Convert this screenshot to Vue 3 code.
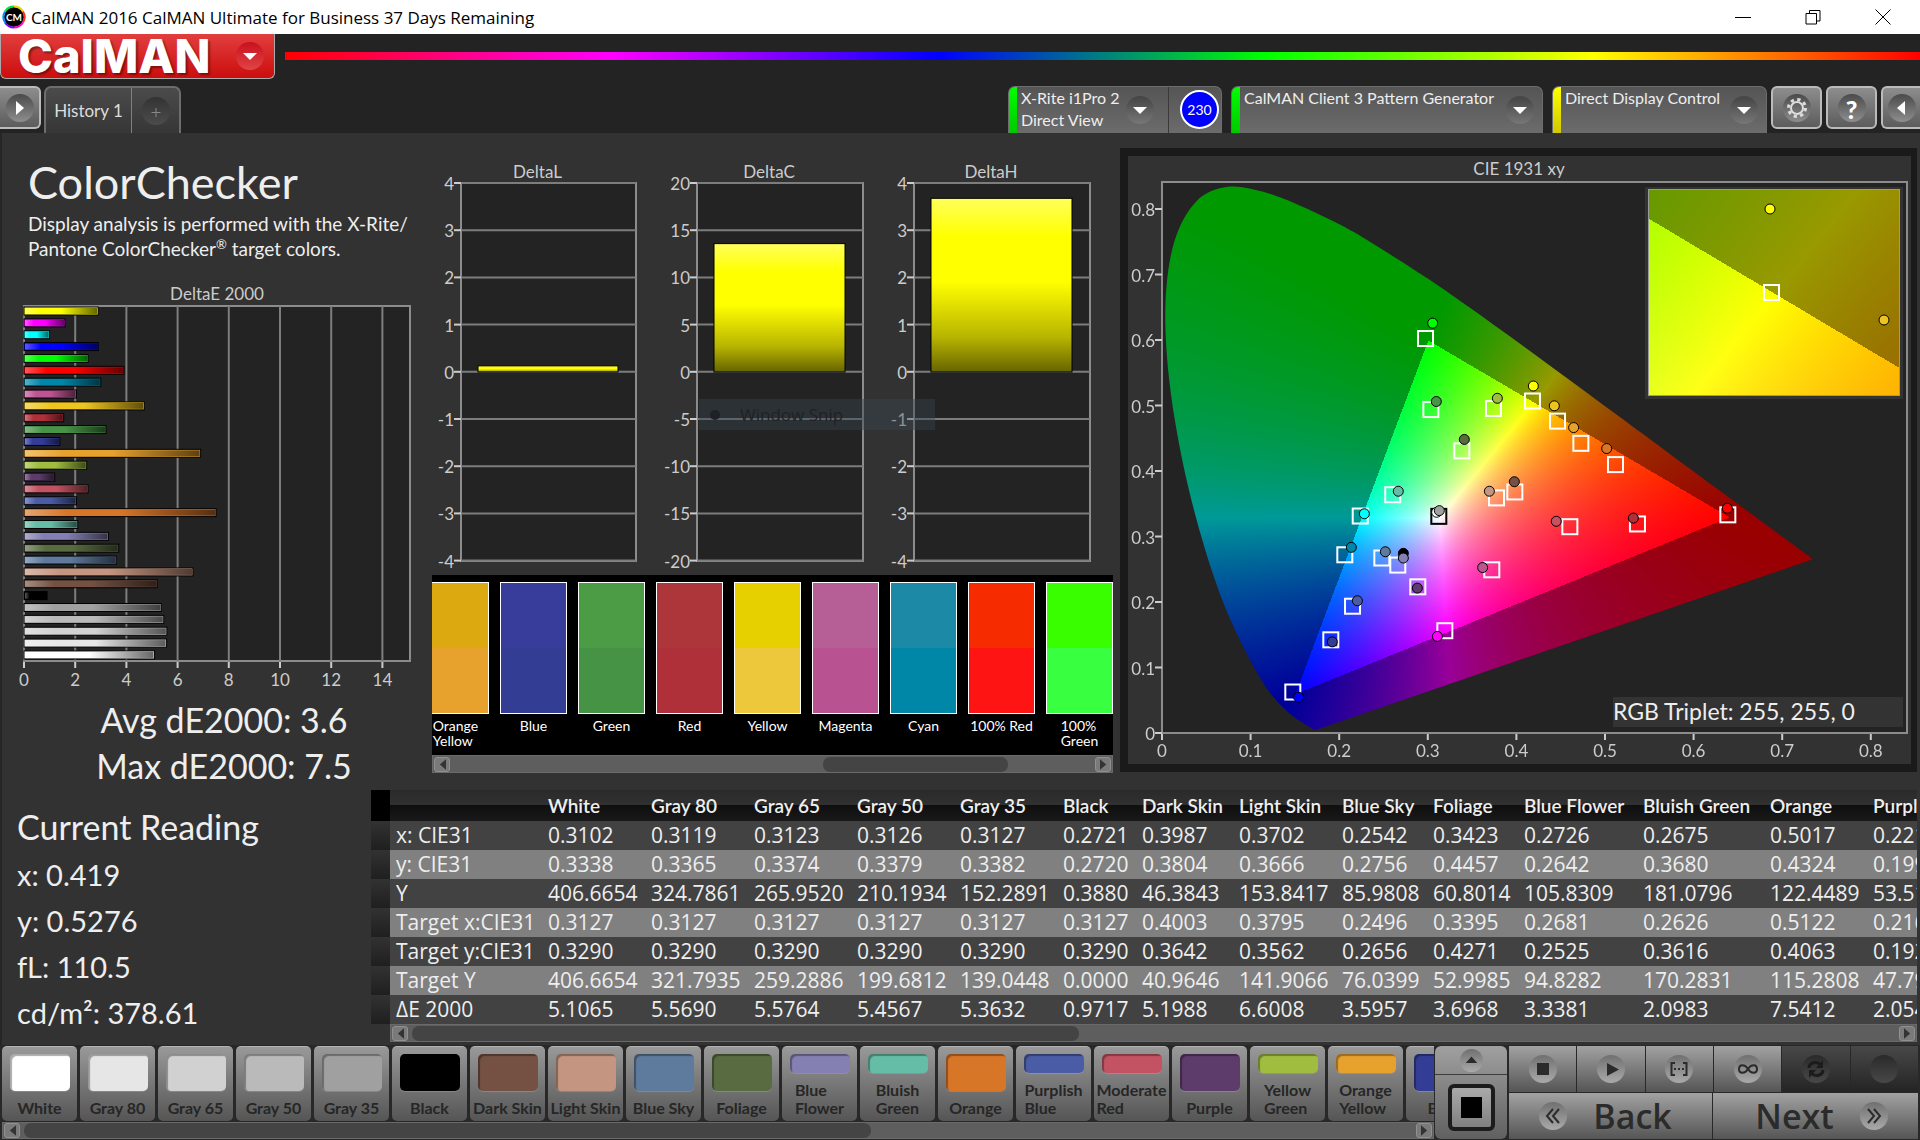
<script setup>
import { onMounted, ref } from 'vue'

/* DeltaE 2000 bars, top to bottom */
const deltaE = [
  [2.9, '#ffff00'], [1.6, '#ff00ff'], [1, '#00ffff'], [2.9, '#0000ff'], [2.5, '#00ff00'],
  [3.9, '#ff0000'], [3, '#0086a8'], [2.05, '#bd5494'], [4.7, '#eec51f'], [1.55, '#b0303a'],
  [3.2, '#479447'], [1.4, '#343d96'], [6.9, '#e7a22e'], [2.45, '#a0bd40'], [1.2, '#5d3b6b'],
  [2.5, '#c35362'], [2.05, '#4a5ca6'], [7.5, '#d87628'], [2.1, '#66bda7'], [3.3, '#8480b2'],
  [3.7, '#596c41'], [3.6, '#5e7a9d'], [6.6, '#c49580'], [5.2, '#745143'], [0.9, '#000000'],
  [5.36, '#a0a0a0'], [5.46, '#bababa'], [5.58, '#d2d2d2'], [5.57, '#e7e7e7'], [5.1, '#ffffff']
]
const deltaETicks = [0, 2, 4, 6, 8, 10, 12, 14]

const deltaCharts = [
  { title: 'DeltaL', x: 29, w: 175, max: 4, value: 0.13 },
  { title: 'DeltaC', x: 265, w: 166, max: 20, value: 13.6 },
  { title: 'DeltaH', x: 482, w: 176, max: 4, value: 3.68 }
]
const steps = [0, 1, 2, 3, 4, 5, 6, 7, 8]
const stepY = (i) => 50 + i * 47.2
const barHeight = (c) => (c.value / c.max) * 188.8

const swatches = [
  ['Orange Yellow', '#dcaa10', '#e7a22e'],
  ['Blue', '#383c9a', '#343d94'],
  ['Green', '#4b9c44', '#479345'],
  ['Red', '#ad363a', '#b0303a'],
  ['Yellow', '#e6d000', '#edc83a'],
  ['Magenta', '#b65e96', '#b95290'],
  ['Cyan', '#1c8aa6', '#0086a6'],
  ['100% Red', '#f62c00', '#ff1414'],
  ['100% Green', '#38fe00', '#38ff40']
]

/* Chromaticity diagram */
const PW = 745
const PH = 551
const SX = 886
const SY = 655
const px = (x) => x * SX
const py = (y) => PH - y * SY
const cieX = [0, 0.1, 0.2, 0.3, 0.4, 0.5, 0.6, 0.7, 0.8]
const targets = [
  [0.298, 0.6015], [0.304, 0.493], [0.3747, 0.4947], [0.339, 0.43], [0.261, 0.363], [0.2243, 0.3305],
  [0.2069, 0.2713], [0.2487, 0.2664], [0.2667, 0.2556], [0.2893, 0.2224], [0.2156, 0.1928], [0.1911, 0.1415],
  [0.1482, 0.0618], [0.3198, 0.1554], [0.3728, 0.2484], [0.3781, 0.3582], [0.4187, 0.5061], [0.447, 0.4754],
  [0.4733, 0.4415], [0.5124, 0.409], [0.3988, 0.3673], [0.4609, 0.3142], [0.5372, 0.3184], [0.6392, 0.3323]
]
const readings = [
  [0.3055, 0.6257, '#00ff00'], [0.3096, 0.5061, '#479447'], [0.3785, 0.511, '#a0bd40'], [0.3412, 0.4482, '#596c41'],
  [0.2667, 0.3691, '#66bda7'], [0.2284, 0.3347, '#00ffff'], [0.2137, 0.2834, '#0086a8'], [0.2521, 0.2767, '#5e7a9d'],
  [0.2724, 0.2743, '#000000'], [0.2724, 0.2671, '#8480b2'], [0.2882, 0.2212, '#5d3b6b'], [0.2205, 0.2019, '#4a5ca6'],
  [0.1922, 0.1391, '#343d96'], [0.1542, 0.0546, '#0000ff'], [0.3108, 0.1475, '#ff00ff'], [0.3619, 0.2526, '#bd5494'],
  [0.3695, 0.3691, '#c49580'], [0.31, 0.337, '#ffffff'], [0.313, 0.3395, '#a0a0a0'], [0.3977, 0.3836, '#745143'],
  [0.4191, 0.5297, '#ffff00'], [0.4428, 0.4995, '#eec51f'], [0.4646, 0.4663, '#e7a22e'], [0.5019, 0.4343, '#d87628'],
  [0.445, 0.3232, '#c35362'], [0.532, 0.3281, '#b0303a'], [0.6381, 0.3431, '#ff0000']
]
const locus = [
  [0.1741, 0.005], [0.1733, 0.0048], [0.1714, 0.0051], [0.1644, 0.0109], [0.1566, 0.0177], [0.144, 0.0297],
  [0.1241, 0.0578], [0.1096, 0.0868], [0.0913, 0.1327], [0.0687, 0.2007], [0.0454, 0.295], [0.0235, 0.4127],
  [0.0082, 0.5384], [0.0039, 0.6548], [0.0139, 0.7502], [0.0389, 0.812], [0.0743, 0.8338], [0.1142, 0.8262],
  [0.1547, 0.8059], [0.1929, 0.7816], [0.2296, 0.7543], [0.3016, 0.6923], [0.3731, 0.6245], [0.4441, 0.5547],
  [0.5125, 0.4866], [0.5752, 0.4242], [0.627, 0.3725], [0.6658, 0.334], [0.6915, 0.3083], [0.7347, 0.2653]
]

function chromaImage(w, h, x0, y0, sx, sy) {
  const c = document.createElement('canvas')
  c.width = w
  c.height = h
  const ctx = c.getContext('2d')
  const img = ctx.createImageData(w, h)
  for (let j = 0; j < h; j++) {
    const y = Math.max(y0 - j / sy, 0.0001)
    for (let i = 0; i < w; i++) {
      const x = x0 + i / sx
      const X = x / y
      const Z = (1 - x - y) / y
      const r = 3.2406 * X - 1.5372 - 0.4986 * Z
      const g = -0.9689 * X + 1.8758 + 0.0415 * Z
      const b = 0.0557 * X - 0.204 + 1.057 * Z
      const outside = r < 0 || g < 0 || b < 0
      const k = ((outside ? 0.6 : 1) * 255) / Math.max(r, g, b)
      const o = (j * w + i) * 4
      img.data[o] = Math.max(r, 0) * k
      img.data[o + 1] = Math.max(g, 0) * k
      img.data[o + 2] = Math.max(b, 0) * k
      img.data[o + 3] = 255
    }
  }
  ctx.putImageData(img, 0, 0)
  return c
}

const diagram = ref(null)
const inset = ref(null)

onMounted(() => {
  const ctx = diagram.value.getContext('2d')
  const p = locus.map(([x, y]) => [px(x), py(y)])
  ctx.beginPath()
  ctx.moveTo(p[0][0], p[0][1])
  for (let i = 0; i < p.length - 1; i++) {
    const a = p[Math.max(i - 1, 0)]
    const b = p[i]
    const c = p[i + 1]
    const d = p[Math.min(i + 2, p.length - 1)]
    ctx.bezierCurveTo(
      b[0] + (c[0] - a[0]) / 6, b[1] + (c[1] - a[1]) / 6,
      c[0] - (d[0] - b[0]) / 6, c[1] - (d[1] - b[1]) / 6,
      c[0], c[1]
    )
  }
  ctx.closePath()
  ctx.clip()
  ctx.drawImage(chromaImage(PW, PH, 0, PH / SY, SX, SY), 0, 0)
  inset.value.getContext('2d').drawImage(
    chromaImage(250, 205, 0.4193 - 125 / 4800, 0.5053 + 103 / 3600, 4800, 3600), 0, 0
  )
})

const columns = ['White', 'Gray 80', 'Gray 65', 'Gray 50', 'Gray 35', 'Black', 'Dark Skin', 'Light Skin', 'Blue Sky', 'Foliage', 'Blue Flower', 'Bluish Green', 'Orange', 'Purplish Blue']
const rows = [
  ['x: CIE31', '0.3102', '0.3119', '0.3123', '0.3126', '0.3127', '0.2721', '0.3987', '0.3702', '0.2542', '0.3423', '0.2726', '0.2675', '0.5017', '0.2213'],
  ['y: CIE31', '0.3338', '0.3365', '0.3374', '0.3379', '0.3382', '0.2720', '0.3804', '0.3666', '0.2756', '0.4457', '0.2642', '0.3680', '0.4324', '0.1991'],
  ['Y', '406.6654', '324.7861', '265.9520', '210.1934', '152.2891', '0.3880', '46.3843', '153.8417', '85.9808', '60.8014', '105.8309', '181.0796', '122.4489', '53.5106'],
  ['Target x:CIE31', '0.3127', '0.3127', '0.3127', '0.3127', '0.3127', '0.3127', '0.4003', '0.3795', '0.2496', '0.3395', '0.2681', '0.2626', '0.5122', '0.2160'],
  ['Target y:CIE31', '0.3290', '0.3290', '0.3290', '0.3290', '0.3290', '0.3290', '0.3642', '0.3562', '0.2656', '0.4271', '0.2525', '0.3616', '0.4063', '0.1920'],
  ['Target Y', '406.6654', '321.7935', '259.2886', '199.6812', '139.0448', '0.0000', '40.9646', '141.9066', '76.0399', '52.9985', '94.8282', '170.2831', '115.2808', '47.7903'],
  ['ΔE 2000', '5.1065', '5.5690', '5.5764', '5.4567', '5.3632', '0.9717', '5.1988', '6.6008', '3.5957', '3.6968', '3.3381', '2.0983', '7.5412', '2.0543']
]

const patches = [
  ['White', '#ffffff'], ['Gray 80', '#e6e6e6'], ['Gray 65', '#d1d1d1'], ['Gray 50', '#bababa'], ['Gray 35', '#a0a0a0'],
  ['Black', '#000000'], ['Dark Skin', '#745143'], ['Light Skin', '#c49580'], ['Blue Sky', '#5e7a9d'], ['Foliage', '#596c41'],
  ['Blue\nFlower', '#8480b2'], ['Bluish\nGreen', '#66bda7'], ['Orange', '#d87628'], ['Purplish\nBlue', '#4a5ca6'],
  ['Moderate\nRed', '#c35362'], ['Purple', '#5d3b6b'], ['Yellow\nGreen', '#a0bd40'], ['Orange\nYellow', '#e7a22e'], ['Blue', '#343d96']
]
</script>

<template>
  <div class="app">
    <header class="titlebar">
      <svg class="app-icon" viewBox="0 0 24 24" aria-hidden="true">
        <circle cx="12" cy="12" r="10" fill="#000" />
        <g fill="none" stroke-width="2">
          <path d="M12 1.500A10.500 10.500 0 0 1 21 6.500" stroke="#e6d500" />
          <path d="M21 6.500A10.500 10.500 0 0 1 21 17.500" stroke="#ff2a2a" />
          <path d="M21 17.500A10.500 10.500 0 0 1 12 22.500" stroke="#ff00c8" />
          <path d="M12 22.500A10.500 10.500 0 0 1 3 17.500" stroke="#7a00ff" />
          <path d="M3 17.500A10.500 10.500 0 0 1 3 6.500" stroke="#0090ff" />
          <path d="M3 6.500A10.500 10.500 0 0 1 12 1.500" stroke="#00e04a" />
        </g>
        <text x="12" y="16" text-anchor="middle" class="icon-text">CM</text>
      </svg>
      <span class="title">CalMAN 2016 CalMAN Ultimate for Business 37 Days Remaining</span>
      <div class="window-buttons">
        <button aria-label="Minimize"><svg viewBox="0 0 16 16"><path d="M0 8.500H16" /></svg></button>
        <button aria-label="Restore"><svg viewBox="0 0 16 16"><path d="M1 4.500H11.500V15H1ZM4.500 4.500V1.500H15V12H11.500" /></svg></button>
        <button aria-label="Close"><svg viewBox="0 0 16 16"><path d="M0.500 0.500L15.500 15.500M15.500 0.500L0.500 15.500" /></svg></button>
      </div>
    </header>

    <div class="brand-row">
      <button class="brand">
        <span class="wordmark">CalMAN</span>
        <span class="knob red"><svg viewBox="0 0 28 28"><path d="M7 11H21L14 18Z" /></svg></span>
      </button>
      <div class="spectrum"></div>
    </div>

    <div class="toolbar">
      <button class="square edge-left" aria-label="Expand left panel">
        <span class="knob"><svg viewBox="0 0 28 28"><path d="M10 7V21L18 14Z" /></svg></span>
      </button>
      <nav class="tabs">
        <button class="tab">History 1</button>
        <button class="tab add" aria-label="Add tab"><span class="knob dim"><svg viewBox="0 0 28 28"><path d="M14 11V20M9.500 15.500H18.500" stroke="#888" /></svg></span></button>
      </nav>
      <div class="devices">
        <div class="device meter">
          <i class="status green"></i>
          <button class="device-main"><span class="device-name">X-Rite i1Pro 2<br />Direct View</span>
            <span class="knob dark"><svg viewBox="0 0 28 28"><path d="M7 11H21L14 18Z" /></svg></span></button>
          <button class="count"><span>230</span></button>
        </div>
        <div class="device source">
          <i class="status green"></i>
          <button class="device-main"><span class="device-name">CalMAN Client 3 Pattern Generator</span>
            <span class="knob dark"><svg viewBox="0 0 28 28"><path d="M7 11H21L14 18Z" /></svg></span></button>
        </div>
        <div class="device display">
          <i class="status yellow"></i>
          <button class="device-main"><span class="device-name">Direct Display Control</span>
            <span class="knob dark"><svg viewBox="0 0 28 28"><path d="M7 11H21L14 18Z" /></svg></span></button>
        </div>
        <button class="square" aria-label="Settings">
          <span class="knob"><svg viewBox="0 0 28 28">
            <circle cx="14" cy="14" r="6" fill="none" stroke="#ddd" stroke-width="2" />
            <circle cx="14" cy="14" r="8.500" fill="none" stroke="#ddd" stroke-width="3" stroke-dasharray="3.300 3.375" />
          </svg></span>
        </button>
        <button class="square" aria-label="Help"><span class="knob help">?</span></button>
        <button class="square edge-right" aria-label="Expand right panel">
          <span class="knob"><svg viewBox="0 0 28 28"><path d="M17 7V21L9 14Z" /></svg></span>
        </button>
      </div>
    </div>

    <main class="content">
      <section class="upper">
        <div class="summary">
          <h1>ColorChecker</h1>
          <p class="intro">Display analysis is performed with the X-Rite/<br />Pantone ColorChecker<sup>®</sup> target colors.</p>
          <svg class="chart" viewBox="0 0 430 414">
            <defs>
              <linearGradient id="sheen" x1="0" x2="1" y1="0" y2="0">
                <stop offset="0" stop-color="#fff" stop-opacity=".35" />
                <stop offset=".22" stop-color="#fff" stop-opacity="0" />
                <stop offset=".5" stop-color="#000" stop-opacity="0" />
                <stop offset="1" stop-color="#000" stop-opacity=".6" />
              </linearGradient>
            </defs>
            <text x="215" y="17" text-anchor="middle">DeltaE 2000</text>
            <rect x="22" y="23" width="386" height="355" class="plot" />
            <g v-for="t in deltaETicks" :key="t">
              <line :x1="22 + t * 25.6" :x2="22 + t * 25.6" y1="23" y2="378" class="grid" />
              <line :x1="22 + t * 25.6" :x2="22 + t * 25.6" y1="379" y2="385" class="tick" />
              <text :x="22 + t * 25.6" y="403" text-anchor="middle">{{ t }}</text>
            </g>
            <g v-for="(b, i) in deltaE" :key="i">
              <rect x="22" :y="24 + i * 11.86" :width="b[0] * 25.6" height="8" :fill="b[1]" stroke="#000" />
              <rect x="23" :y="25 + i * 11.86" :width="b[0] * 25.6 - 2" height="6" fill="url(#sheen)" />
            </g>
          </svg>
          <p class="stat">Avg dE2000: 3.6</p>
          <p class="stat">Max dE2000: 7.5</p>
        </div>

        <div class="middle">
          <div class="delta">
            <svg class="chart" viewBox="0 0 688 442">
              <defs>
                <linearGradient id="yellow" x1="0" x2="0" y1="0" y2="1">
                  <stop offset="0" stop-color="#ffff5c" />
                  <stop offset=".22" stop-color="#ffff00" />
                  <stop offset=".48" stop-color="#ffff00" />
                  <stop offset=".8" stop-color="#b8b400" />
                  <stop offset="1" stop-color="#666400" />
                </linearGradient>
              </defs>
              <g v-for="c in deltaCharts" :key="c.title">
                <text :x="c.x + c.w / 2 - 11" y="45" text-anchor="middle">{{ c.title }}</text>
                <rect :x="c.x" y="50" :width="c.w" height="378" class="plot" />
                <g v-for="i in steps" :key="i">
                  <line :x1="c.x" :x2="c.x + c.w" :y1="stepY(i)" :y2="stepY(i)" class="grid" />
                  <line :x1="c.x - 7" :x2="c.x" :y1="stepY(i)" :y2="stepY(i)" class="tick thin" />
                  <text :x="c.x - 7" :y="stepY(i) + 7" text-anchor="end">{{ c.max - (i * c.max) / 4 }}</text>
                </g>
                <rect :x="c.x + 17" :y="239 - barHeight(c)" :width="c.w - 35" :height="barHeight(c)" fill="url(#yellow)" stroke="#000" />
              </g>
            </svg>
            <div class="ghost"><i></i><span>Window Snip</span></div>
          </div>
          <div class="comparison">
            <div class="swatch-strip">
              <figure v-for="s in swatches" :key="s[0]" class="swatch">
                <div class="swatch-color"><i :style="{ background: s[1] }"></i><i :style="{ background: s[2] }"></i></div>
                <figcaption :class="{ two: s[0] === 'Orange Yellow' || s[0] === '100% Green' }">{{ s[0] }}</figcaption>
              </figure>
            </div>
            <div class="scroll strip-scroll">
              <button aria-label="Scroll left"><svg viewBox="0 0 8 12"><path d="M8 0V12L1 6Z" /></svg></button>
              <div class="track"><i></i></div>
              <button aria-label="Scroll right"><svg viewBox="0 0 8 12"><path d="M0 0V12L7 6Z" /></svg></button>
            </div>
          </div>
        </div>

        <div class="cie">
          <svg class="chart" viewBox="0 0 783 608">
            <text x="391" y="19" text-anchor="middle">CIE 1931 xy</text>
            <g transform="translate(34 26)">
              <rect width="745" height="551" class="plot" />
              <foreignObject width="745" height="551"><canvas ref="diagram" width="745" height="551"></canvas></foreignObject>
              <g v-for="v in cieX" :key="v">
                <line :x1="px(v)" :x2="px(v)" y1="552" y2="558" class="tick" />
                <text :x="px(v)" y="575" text-anchor="middle">{{ v }}</text>
                <line x1="-7" x2="0" :y1="py(v)" :y2="py(v)" class="tick" />
                <text x="-7" :y="py(v) + 7" text-anchor="end">{{ v }}</text>
              </g>
              <rect v-for="(t, i) in targets" :key="'t' + i" :x="px(t[0]) - 8" :y="py(t[1]) - 8" width="15" height="15" class="target" />
              <rect :x="px(0.313) - 8" :y="py(0.33) - 8" width="15" height="15" class="target white-point" />
              <circle v-for="(r, i) in readings" :key="'r' + i" :cx="px(r[0])" :cy="py(r[1])" r="5" :fill="r[2]" stroke="#000" />
              <rect x="483" y="5" width="258" height="212" fill="#333" />
              <foreignObject x="487" y="8" width="250" height="205"><canvas ref="inset" width="250" height="205"></canvas></foreignObject>
              <rect x="486.500" y="7.500" width="251" height="206" fill="none" stroke="#999" />
              <circle cx="608" cy="27" r="5" fill="#ffff00" stroke="#000" />
              <rect x="602" y="103" width="15" height="15" class="target" />
              <circle cx="722" cy="138" r="5" fill="#eec51f" stroke="#000" />
              <rect x="451" y="515" width="290" height="30" fill="#333" />
              <text x="451" y="538" class="triplet">RGB Triplet: 255, 255, 0</text>
            </g>
          </svg>
        </div>
      </section>

      <section class="lower">
        <div class="reading">
          <h2>Current Reading</h2>
          <p>x: 0.419</p>
          <p>y: 0.5276</p>
          <p>fL: 110.5</p>
          <p>cd/m²: 378.61</p>
        </div>
        <div class="data">
          <div class="table-clip">
            <table>
              <colgroup>
                <col class="w-handle" /><col class="w-label" />
                <col class="w-wide" /><col class="w-wide" /><col class="w-wide" /><col class="w-wide" /><col class="w-wide" />
                <col class="w-black" /><col class="w-dark" /><col class="w-wide" /><col class="w-sky" /><col class="w-sky" />
                <col class="w-flower" /><col class="w-bluish" /><col class="w-wide" /><col class="w-last" />
              </colgroup>
              <thead>
                <tr><td class="handle"></td><th></th><th v-for="c in columns" :key="c" scope="col">{{ c }}</th></tr>
              </thead>
              <tbody>
                <tr v-for="r in rows" :key="r[0]">
                  <td class="handle"></td>
                  <th scope="row">{{ r[0] }}</th>
                  <td v-for="(v, i) in r.slice(1)" :key="i">{{ v }}</td>
                </tr>
              </tbody>
            </table>
          </div>
          <div class="scroll table-scroll">
            <button aria-label="Scroll left"><svg viewBox="0 0 8 12"><path d="M8 0V12L1 6Z" /></svg></button>
            <div class="track"><i></i></div>
            <button aria-label="Scroll right"><svg viewBox="0 0 8 12"><path d="M0 0V12L7 6Z" /></svg></button>
          </div>
        </div>
      </section>
    </main>

    <footer class="dock">
      <div class="patch-area">
        <div class="patches">
          <button v-for="p in patches" :key="p[0]" class="patch">
            <i :class="{ short: p[0].includes('\n') }" :style="{ background: p[1] }"></i>
            <span>{{ p[0] }}</span>
          </button>
        </div>
        <div class="scroll patch-scroll">
          <button aria-label="Scroll left"><svg viewBox="0 0 8 12"><path d="M8 0V12L1 6Z" /></svg></button>
          <div class="track"><i></i></div>
          <button aria-label="Scroll right"><svg viewBox="0 0 8 12"><path d="M0 0V12L7 6Z" /></svg></button>
        </div>
      </div>

      <div class="pattern">
        <button class="up" aria-label="Show pattern options"><span class="knob light"><svg viewBox="0 0 28 28"><path d="M7 17H21L14 9Z" /></svg></span></button>
        <button class="window" aria-label="Pattern window"><span><i></i></span></button>
      </div>

      <div class="transport">
        <div class="actions">
          <button aria-label="Stop"><span class="knob light"><svg viewBox="0 0 28 28"><path d="M8 8H20V20H8Z" /></svg></span></button>
          <button aria-label="Play"><span class="knob light"><svg viewBox="0 0 28 28"><path d="M10 8V21L22 14.500Z" /></svg></span></button>
          <button aria-label="Read series"><span class="knob light"><svg viewBox="0 0 28 28"><path d="M10 8H6.500V20H10M18 8H21.500V20H18" class="line" /><path d="M9 13H11V15H9ZM13 13H15V15H13ZM17 13H19V15H17Z" /></svg></span></button>
          <button aria-label="Read continuously"><span class="knob light"><svg viewBox="0 0 28 28"><path d="M14 14C11 9 5 9 5 14S11 19 14 14S23 9 23 14S17 19 14 14Z" class="line" /></svg></span></button>
          <button aria-label="Refresh" disabled><span class="knob off"><svg viewBox="0 0 28 28"><path d="M7 13C7 8 13 6 18 9M21 15C21 20 15 22 10 19" class="line thick" /><path d="M21 5V13H14ZM7 23V15H14Z" /></svg></span></button>
          <button aria-label="Record" disabled><span class="knob off"></span></button>
        </div>
        <div class="steps">
          <button class="back"><span class="knob light"><svg viewBox="0 0 28 28"><path d="M14 7L8 14L14 21M20 7L14 14L20 21" class="line" /></svg></span>Back</button>
          <button class="next">Next<span class="knob light"><svg viewBox="0 0 28 28"><path d="M8 7L14 14L8 21M14 7L20 14L14 21" class="line" /></svg></span></button>
        </div>
      </div>
    </footer>
  </div>
</template>

<style>
body {
  background: #232323;
}
</style>

<style scoped>
.app {
  min-height: 100vh;
  display: flex;
  flex-direction: column;
  background: #232323;
  color: #eee;
  font-family: Lato, "Open Sans", sans-serif;
  overflow: hidden;
}
.app * {
  box-sizing: border-box;
}
button {
  border: 0;
  margin: 0;
  padding: 0;
  background: none;
  color: inherit;
  font: inherit;
}
svg {
  display: block;
}
p, h1, h2, figure {
  margin: 0;
  font-weight: 400;
}

/* Title bar */
.titlebar {
  height: 34px;
  display: flex;
  align-items: center;
  gap: 5px;
  padding-left: 2px;
  background: #fff;
  color: #000;
}
.app-icon {
  width: 24px;
  height: 24px;
}
.icon-text {
  font: 700 10px Lato, sans-serif;
  fill: #fff;
}
.title {
  flex: 1;
  font: 17px "Open Sans", sans-serif;
}
.window-buttons {
  display: flex;
  padding-right: 2px;
}
.window-buttons button {
  width: 70px;
  height: 34px;
  display: grid;
  place-items: center;
}
.window-buttons svg {
  width: 16px;
  height: 16px;
  fill: none;
  stroke: #000;
}

/* Brand and spectrum */
.brand-row {
  display: flex;
  height: 45px;
  gap: 10px;
}
.brand {
  width: 275px;
  display: flex;
  align-items: center;
  justify-content: space-between;
  padding: 0 10px 0 17px;
  border: 1px solid #aaa;
  border-top: 0;
  border-radius: 0 0 6px 6px;
  background: linear-gradient(#e23e3e, #cc0d0d);
  color: #fff;
}
.wordmark {
  font: 800 47px/44px Inter, sans-serif;
  text-shadow: 2px 2px 2px #0006;
}
.spectrum {
  flex: 1;
  height: 8px;
  margin-top: 18px;
  background: linear-gradient(90deg, #f00, #f0f, #00f, #0f0, #ff0, #f00);
}

/* Round knobs behind glyphs */
.knob {
  flex: none;
  width: 28px;
  height: 28px;
  display: grid;
  place-items: center;
  border-radius: 50%;
  background: linear-gradient(#4a4a4a, #8e8e8e);
  color: #fff;
}
.knob svg {
  width: 28px;
  height: 28px;
  fill: #fff;
}
.knob.red {
  background: linear-gradient(#c9101e, #e04545);
}
.knob.dim {
  background: linear-gradient(#333, #4c4c4c);
}
.knob.dark {
  background: linear-gradient(#444, #777);
}
.knob.light {
  background: linear-gradient(#707070, #aaa);
}
.knob.light svg {
  fill: #2b2b2b;
}
.knob.off {
  background: linear-gradient(#2a2a2a, #484848);
}
.knob.off svg {
  fill: #1c1c1c;
}
.knob .line {
  fill: none;
  stroke: #2b2b2b;
  stroke-width: 2;
}
.knob .thick {
  stroke: #1c1c1c;
  stroke-width: 3;
}
.help {
  font-size: 25px;
  font-weight: 900;
}

/* Toolbar */
.toolbar {
  height: 54px;
  display: flex;
  align-items: flex-start;
  padding-top: 7px;
}
.square {
  width: 51px;
  height: 43px;
  display: grid;
  place-items: center;
  border: 2px solid #bbb;
  border-radius: 6px;
  background: linear-gradient(#8d8d8d, #5c5c5c);
}
.edge-left {
  width: 41px;
  border-left: 0;
  border-radius: 0 6px 6px 0;
}
.edge-right {
  width: 39px;
  border-right: 0;
  border-radius: 6px 0 0 6px;
}
.tabs {
  display: flex;
  margin-left: 3px;
  height: 47px;
  border: 2px solid #6d6d6d;
  border-bottom: 0;
  border-radius: 7px 7px 0 0;
  background: linear-gradient(#4b4b4b, #363636);
}
.tab {
  width: 85px;
  color: #ddd;
  font-size: 17px;
}
.add {
  width: 48px;
  display: grid;
  place-items: center;
  border-left: 1px solid #808080;
}
.devices {
  flex: 1;
  display: flex;
  justify-content: flex-end;
  gap: 4px;
}
.device {
  display: flex;
  height: 47px;
  border: 1px solid #6d6d6d;
  border-bottom: 0;
  border-radius: 7px 7px 0 0;
  background: linear-gradient(#555, #6c6c6c);
  overflow: hidden;
}
.meter {
  width: 214px;
  margin-right: 5px;
}
.source {
  width: 312px;
  margin-right: 5px;
}
.display {
  width: 215px;
}
.status {
  width: 8px;
}
.status.green {
  background: linear-gradient(#0f0, #00c800);
}
.status.yellow {
  background: linear-gradient(#ff0, #d2c800);
}
.device-main {
  flex: 1;
  display: flex;
  align-items: flex-start;
  justify-content: space-between;
  padding: 0 8px 0 4px;
  text-align: left;
}
.device-name {
  font-size: 16px;
  line-height: 22px;
  white-space: nowrap;
}
.device-main .knob {
  margin-top: 9px;
}
.meter .device-main {
  padding-right: 14px;
}
.count {
  width: 53px;
  display: flex;
  align-items: center;
  justify-content: flex-end;
  padding: 0 2px 2px 0;
  border-left: 1px solid #3a3a3a;
}
.count span {
  width: 39px;
  height: 39px;
  border: 2px solid #fff;
  border-radius: 50%;
  background: #00f;
  color: #fff;
  font-size: 14px;
  line-height: 35px;
  text-align: center;
}

/* Main workspace */
.content {
  background: #323232;
  border-left: 2px solid #262626;
  padding-right: 3px;
  flex: 1;
}
.upper {
  display: grid;
  grid-template-columns: minmax(0, 430fr) minmax(0, 688fr) minmax(0, 797fr);
  height: 657px;
}
.chart {
  width: 100%;
  overflow: visible;
  font-size: 17px;
  fill: #ccc;
}
.plot {
  fill: #232323;
  stroke: #8c8c8c;
  stroke-width: 2;
}
.grid {
  stroke: #7d7d7d;
  stroke-width: 2;
}
.tick {
  stroke: #ccc;
  stroke-width: 2;
}
h1 {
  padding: 20px 0 0 26px;
  font-size: 45px;
  line-height: 58px;
}
.intro {
  padding-left: 26px;
  font-size: 19px;
  line-height: 25px;
  white-space: nowrap;
}
.intro sup {
  font-size: 13px;
  line-height: 1px;
}
.summary .chart {
  margin-top: 22px;
}
.stat {
  width: 444px;
  font-size: 34px;
  line-height: 46px;
  text-align: center;
}

.delta {
  position: relative;
}
.ghost {
  position: absolute;
  left: 267px;
  top: 266px;
  width: 236px;
  height: 31px;
  display: flex;
  align-items: center;
  background: #38444e70;
  color: #1e2226;
  font: 17px "Open Sans", sans-serif;
}
.ghost i {
  width: 10px;
  height: 10px;
  margin: 0 20px 0 11px;
  border-radius: 50%;
  background: #1e2226;
}

.comparison {
  width: 681px;
  max-width: 99%;
}
.swatch-strip {
  height: 180px;
  display: flex;
  justify-content: flex-end;
  gap: 11px;
  padding-top: 7px;
  background: #000;
  overflow: hidden;
}
.swatch {
  flex: none;
  width: 67px;
  text-align: center;
}
.swatch-color {
  height: 132px;
  display: flex;
  flex-direction: column;
  border: 1px solid #fff;
}
.swatch-color i {
  flex: 1;
}
figcaption {
  display: inline-block;
  margin-top: 4px;
  color: #fff;
  font-size: 14px;
  line-height: 15px;
  text-align: left;
  white-space: nowrap;
}
figcaption.two {
  width: min-content;
  white-space: normal;
}

/* Scroll bars */
.scroll {
  height: 18px;
  display: flex;
  align-items: center;
  gap: 4px;
  padding: 0 1px;
  border: 1px solid #6a6a6a;
  background: #5e5e5e;
}
.scroll button {
  width: 16px;
  height: 15px;
  display: grid;
  place-items: center;
  border: 1px solid #909090;
  border-radius: 3px;
  background: #7a7a7a;
}
.scroll svg {
  width: 7px;
  height: 11px;
  fill: #333;
}
.track {
  flex: 1;
  height: 15px;
  display: flex;
}
.track i {
  border-radius: 7px;
  background: #444;
}
.strip-scroll .track i {
  width: 29%;
  margin-left: 58%;
}
.table-scroll .track i {
  width: 45%;
}
.patch-scroll .track i {
  width: 61%;
}

.cie {
  margin-top: 15px;
  height: 624px;
  padding: 8px 6px 8px 8px;
  background: #1a1a1a;
}
.cie .chart {
  background: #323232;
}
canvas {
  display: block;
}
.target {
  fill: none;
  stroke: #fff;
  stroke-width: 2;
}
.white-point {
  stroke: #000;
}
.triplet {
  fill: #eee;
  font-size: 23px;
}

/* Readings and table */
.lower {
  display: flex;
}
.reading {
  width: 369px;
  padding: 12px 0 0 15px;
}
.reading h2 {
  font-size: 34px;
  line-height: 50px;
}
.reading p {
  font-size: 29px;
  line-height: 46px;
}
.data {
  flex: 1;
  min-width: 0;
}
.table-clip {
  overflow: hidden;
}
table {
  width: 1599px;
  table-layout: fixed;
  border-collapse: collapse;
  font: 21px "Open Sans", "Noto Sans", sans-serif;
}
.w-handle { width: 19px; }
.w-label { width: 152px; }
.w-wide { width: 103px; }
.w-black { width: 79px; }
.w-dark { width: 97px; }
.w-sky { width: 91px; }
.w-flower { width: 119px; }
.w-bluish { width: 127px; }
.w-last { width: 103px; }
th, td {
  height: 29px;
  padding: 0 0 0 6px;
  font-weight: 400;
  line-height: 29px;
  text-align: left;
  white-space: nowrap;
}
thead th {
  height: 31px;
  background: linear-gradient(#2a2a2a 0, #313131 48%, #0f0f0f 50%, #191919);
  font: 600 19px/31px Lato, sans-serif;
}
thead .handle {
  background: #000;
}
tbody th, tbody td {
  background: #424242;
}
tbody tr:nth-child(even) th, tbody tr:nth-child(even) td {
  background: #808080;
}
tbody tr .handle.handle {
  background: linear-gradient(#323232, #1f1f1f);
}
.table-scroll {
  margin-left: 19px;
}

/* Bottom dock */
.dock {
  display: flex;
  height: 95px;
  padding: 1px 2px 1px;
  background: #282828;
}
.patch-area {
  flex: 1;
  min-width: 0;
  overflow: hidden;
}
.patches {
  display: flex;
  gap: 3px;
  height: 76px;
}
.patch {
  flex: none;
  width: 75px;
  height: 75px;
  display: flex;
  flex-direction: column;
  align-items: center;
  justify-content: space-between;
  padding: 7px 0 4px;
  border-radius: 5px;
  border-top: 1px solid #b4b4b4;
  background: linear-gradient(#999, #555);
  color: #262626;
}
.patch i {
  width: 60px;
  height: 37px;
  border-radius: 5px;
  box-shadow: inset 2px 2px 1px #0005, 0 1px 0 #aaa6;
}
.patch .short {
  height: 19px;
}
.patch span {
  font-size: 16px;
  font-weight: 700;
  line-height: 18px;
  text-align: left;
  white-space: pre;
}
.patch-scroll {
  height: 17px;
}
.pattern {
  width: 72px;
  margin: 0 2px 0 1px;
  display: flex;
  flex-direction: column;
  border-radius: 6px;
  background: linear-gradient(#a0a0a0, #606060);
}
.up {
  height: 29px;
  display: grid;
  place-items: center;
  border-bottom: 1px solid #3c3c3c;
}
.up .knob, .up svg {
  width: 23px;
  height: 23px;
}
.window {
  flex: 1;
  display: grid;
  place-items: center;
}
.window span {
  width: 47px;
  height: 47px;
  display: grid;
  place-items: center;
  border: 4px solid #1c1c1c;
  border-radius: 6px;
  background: linear-gradient(#aaa, #808080);
}
.window i {
  width: 21px;
  height: 21px;
  background: #000;
}
.transport {
  width: 409px;
  display: flex;
  flex-direction: column;
  gap: 1px;
}
.actions, .steps {
  flex: 1;
  display: flex;
  gap: 1px;
}
.actions button, .steps button {
  flex: 1;
  display: flex;
  align-items: center;
  justify-content: center;
  background: linear-gradient(#a2a2a2, #555);
}
.actions button:disabled {
  background: linear-gradient(#484848, #242424);
}
.steps button {
  gap: 26px;
  color: #2b2b2b;
  font: 600 34px/44px "Open Sans", sans-serif;
}
.steps .back {
  padding-right: 10px;
}
.steps .next {
  padding-left: 12px;
}
</style>
